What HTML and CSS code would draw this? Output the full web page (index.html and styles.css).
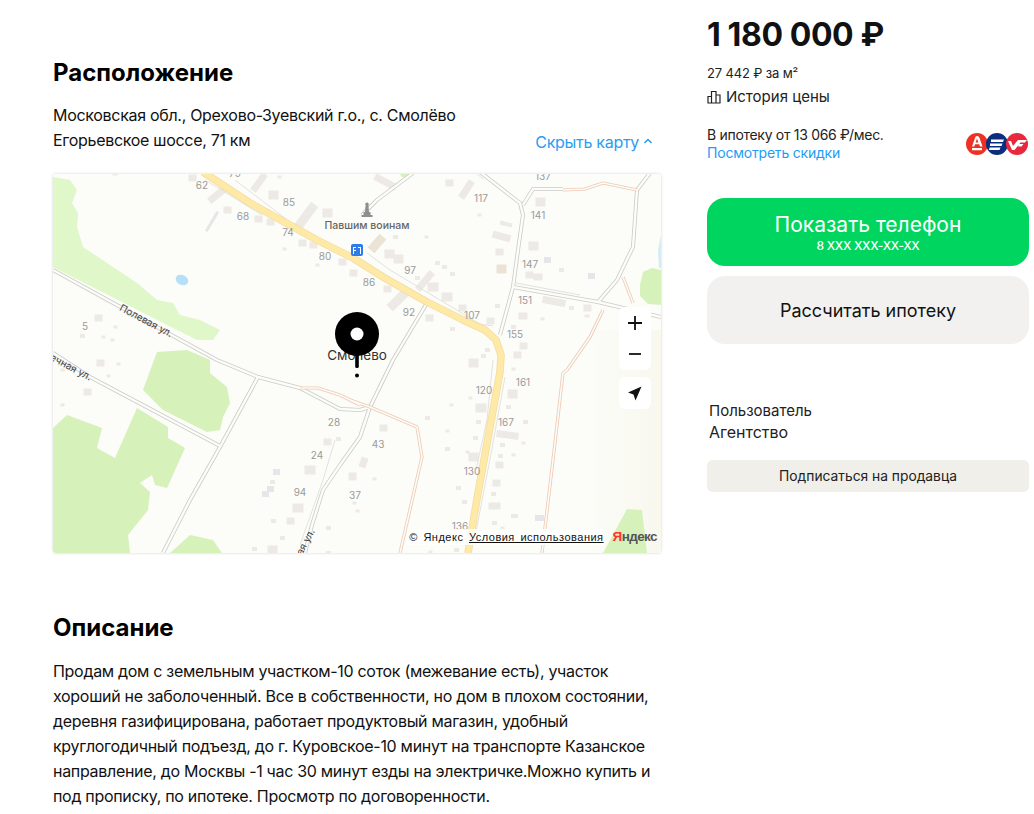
FILE: index.html
```html
<!DOCTYPE html>
<html lang="ru">
<head>
<meta charset="utf-8">
<title>Объявление</title>
<link rel="stylesheet" href="styles.css">
</head>
<body>
<div class="page">
  <main class="left">
    <h2 class="title">Расположение</h2>
    <div class="addr-row">
      <div class="addr">Московская обл., Орехово-Зуевский г.о., с. Смолёво<br>Егорьевское шоссе, 71 км</div>
      <a class="hide-map">Скрыть карту
        <svg class="chev" width="10" height="6" viewBox="0 0 10 6"><path d="M1.5 5 5 1.5 8.5 5"/></svg>
      </a>
    </div>
    <div class="map">
      <svg class="map-svg" width="608" height="379" viewBox="53 174 608 379">
        <defs>
          <linearGradient id="pale" x1="0" y1="0" x2="1" y2="0">
            <stop offset="0" stop-color="#fcfcf8"/>
            <stop offset="1" stop-color="#f8f8ef"/>
          </linearGradient>
          <path id="r1" d="M53 270 217 360 258 377 300 388 340 409 360 410 370 407"/>
          <path id="r2" d="M53 353 90 377 220 446"/>
          <path id="r3" d="M258 377 220 447 190 500 163 553"/>
          <path id="r4" d="M427 303 393 360 370 407 360 437 340 465 323 490 312 525 305 553"/>
          <path id="r5" d="M480 172 520 203 523 215 518 250 513 287 500 335"/>
          <path id="r6" d="M523 205 533 189 563 189"/>
          <path id="r7" d="M650 173 637 190 633 247 617 280 598 302"/>
          <path id="r8" d="M513 287 598 302 661 317"/>
          <path id="r9" d="M413 173 377 200 362 215"/>
          <path id="o1" d="M563 190 585 189 603 183 637 190"/>
          <path id="o2" d="M623 277 633 303"/>
          <path id="o3" d="M603 310 590 337 567 370 563 373 553 460 542 553"/>
          <path id="o4" d="M300 388 318 388 340 395 360 405"/>
          <path id="o5" d="M350 400 370 407 417 427 422 457 400 553"/>
        </defs>
        <rect class="land" x="53" y="174" width="608" height="379"/>
        <rect fill="url(#pale)" x="590" y="330" width="71" height="223"/>
        <g class="green">
          <path d="M53 177 70 180 77 190 72 203 78 213 77 227 83 247 107 263 137 283 157 300 173 303 180 315 200 320 220 330 213 340 197 340 177 330 53 267Z"/>
          <path class="green-d" d="M157 352 187 350 210 360 210 373 227 387 230 403 223 417 220 430 207 432 163 410 143 390Z"/>
          <path class="green-d" d="M53 428 67 415 102 428 97 448 115 458 137 408 168 427 168 438 185 448 167 488 155 485 152 475 140 483 150 492 148 510 128 535 130 553 53 553Z"/>
          <path class="green-d" d="M170 553 190 535 213 540 222 553Z"/>
          <path class="green-d" d="M640 285 643 272 652 268 661 270 661 305 648 304 640 296Z"/>
          <path class="green-d" d="M603 553 627 509 642 510 647 553Z"/>
          <path class="green-d" d="M400 174 413 174 408 177 402 177Z"/>
        </g>
        <path class="lake" d="M661 235 658 250 659 268 661 268Z"/>
        <ellipse class="pond" cx="182" cy="280" rx="6.5" ry="5" transform="rotate(25 182 280)"/>
        <g class="bld">
          <path class="s3" d="M114 174h2M279 177h1M479 215h1M426 237h1M284 249h1M317 265h1M115 327h1M108 376h1M62 405h1M62 370h1M118 364h1M513 369h1M470 398h1M451 405h1M447 431h1M523 443h1M467 452h1M374 479h1M354 503h1M357 511h1M502 528h1M513 455h1M430 552h1M586 316h2M542 319h1M112 340h1M103 337h1"/>
          <path class="s5" d="M502 223 510 225M395 237h1M437 263h1M444 267h1M452 274h1M417 278h1M497 306h1M452 329h1M513 327h1M561 270h1M571 308h1M487 350h1M483 356h1M82 336h1M508 407h1M478 422h1M525 422h1M427 418h1M475 438h1M502 445h1M447 449h1M500 456h1M458 488h1M493 494h1M464 502h1M513 516h3M494 523h1M456 550h1M282 538h1M328 528h1M254 549h1M273 521h1M272 482h1M338 439h1M328 553h1"/>
          <path class="s7" d="M192 178h1M227 210h1M258 219h1M270 222h1M302 243h1M313 245h1M342 262h1M353 273h1M98 318h1M100 363h1M87 392h1M255 188 263 177M212 199 222 191M378 178 393 186M449 183h1M463 195 470 184M496 235 507 238M499 252h1M529 275h1M537 277h2M420 287 430 275M429 318h1M387 289h1M462 308h1M490 321h1M522 316h2M546 300 562 303M587 308h1M523 346h1M517 355h1M500 434 515 436M383 428h1M364 461 363 464M352 476h1M499 465h1M496 483h1M492 506h5M327 442h1M352 477h1M290 521h1"/>
          <path class="s10" d="M273 195h1M300 224 312 208M327 213h1M540 202h1M533 246h1M389 254h1M398 259h1M432 287h2M446 297h2M393 305 405 293M473 363h1M512 394h1M480 408h2M473 457h1M309 470h2M297 508h2M272 550h1"/>
          <path class="tan" d="M501 269h1M374 247 380 240"/>
          <path class="gray-b" d="M547 260h1M591 276h1M538 518h3M276 472h1M265 494h1M270 489h1"/>
          <path class="thin" d="M207 230 217 213"/>
        </g>
        <g class="roads-o">
          <use href="#r1"/><use href="#r2"/><use href="#r3"/><use href="#r4"/><use href="#r5"/><use href="#r6"/><use href="#r7"/><use href="#r8"/><use href="#r9"/>
        </g>
        <g class="roads-i">
          <use href="#r1"/><use href="#r2"/><use href="#r3"/><use href="#r4"/><use href="#r5"/><use href="#r6"/><use href="#r7"/><use href="#r8"/><use href="#r9"/>
        </g>
        <g class="lines">
          <path d="M367 253 390 270 440 300 480 324 493 326M505 377 493 443 477 527 470 553M493 360 487 420 476 470M470 168 483 179M516 283 580 295M335 440 323 480 300 545M235 180 290 222M205 180 262 215"/>
        </g>
        <g class="orange-o">
          <use href="#o1"/><use href="#o2"/><use href="#o3"/><use href="#o4"/><use href="#o5"/>
        </g>
        <g class="orange-i">
          <use href="#o1"/><use href="#o2"/><use href="#o3"/><use href="#o4"/><use href="#o5"/>
        </g>
        <g class="road-y">
          <path class="y-o" d="M203 172 250 203 317 240 353 258 383 277 427 302 463 320 485 330 496 340 501 355 500 372 490 427 478 493 468 553"/>
          <path class="y-i" d="M203 172 250 203 317 240 353 258 383 277 427 302 463 320 485 330 496 340 501 355 500 372 490 427 478 493 468 553"/>
        </g>
        <g class="num">
          <text x="202" y="189">62</text><text x="289" y="206">85</text><text x="243" y="220">68</text><text x="288" y="236">74</text><text x="325" y="260">80</text><text x="85" y="330">5</text><text x="235" y="177">79</text>
          <text x="481" y="202">117</text><text x="538" y="219">141</text><text x="543" y="180">137</text><text x="530" y="268">147</text><text x="410" y="274">97</text><text x="369" y="286">86</text><text x="409" y="316">92</text><text x="525" y="304">151</text><text x="472" y="319">107</text><text x="515" y="338">155</text>
          <text x="484" y="394">120</text><text x="523" y="386">161</text><text x="506" y="426">167</text><text x="378" y="448">43</text><text x="472" y="475">130</text><text x="355" y="499">37</text><text x="334" y="426">28</text><text x="317" y="459">24</text><text x="300" y="496">94</text><text x="460" y="530">136</text>
        </g>
        <g class="street">
          <text transform="translate(146 321) rotate(28)" y="3">Полевая ул.</text>
          <text transform="translate(68 366) rotate(28)" y="3">Речная ул.</text>
          <text transform="translate(300 553) rotate(-62)" y="3">Лесная ул.</text>
        </g>
        <g class="monument"><path d="M365.5 206h3l.5 6h1.500v3h2v2h-11v-2h2v-3h1.500zM367 202.500a1.800 1.800 0 1 0 .01 0z"/></g>
        <text class="poi" x="367" y="229">Павшим воинам</text>
        <rect class="bus" x="351" y="244" width="12" height="12" rx="2"/>
        <path class="bus-g" d="M353 247h3v1h-2v2h2v1h-2v3h-1zM358 247h3v7h-1v-6h-2z"/>
        <text class="place" x="357" y="360">Смолёво</text>
        <circle class="pin" cx="357" cy="334" r="22"/>
        <circle class="pin-hole" cx="357" cy="334" r="6.500"/>
        <rect class="pin" x="355.200" y="350" width="3.600" height="18" rx="1.500"/>
        <circle class="pin" cx="357" cy="375.500" r="2"/>
      </svg>
      <div class="zoom-ctl">
        <svg width="32" height="32" viewBox="0 0 32 32"><path class="ctl-line" d="M16 9v14M9 16h14"/></svg>
        <svg width="32" height="31" viewBox="0 0 32 31"><path class="ctl-line" d="M10 15h12"/></svg>
      </div>
      <div class="loc-ctl">
        <svg width="32" height="32" viewBox="0 0 32 32"><path d="M22.500 9.500 9 15.500l5.500 2 2 6z"/></svg>
      </div>
      <div class="copyright">
        <span class="copy-box">© Яндекс <u>Условия использования</u></span>
        <span class="ya"><b>Я</b>ндекс</span>
      </div>
    </div>
    <h2 class="title title-desc">Описание</h2>
    <p class="desc">Продам дом с земельным участком-10 соток (межевание есть), участок<br>хороший не заболоченный. Все в собственности, но дом в плохом состоянии,<br>деревня газифицирована, работает продуктовый магазин, удобный<br>круглогодичный подъезд, до г. Куровское-10 минут на транспорте Казанское<br>направление, до Москвы -1 час 30 минут езды на электричке.Можно купить и<br>под прописку, по ипотеке. Просмотр по договоренности.</p>
  </main>
  <aside class="right">
    <div class="price">1 180 000 ₽</div>
    <div class="per-m">27 442 ₽ за м²</div>
    <div class="hist">
      <svg width="14" height="14" viewBox="0 0 14 14"><path d="M.5 13h13M1 13V6.500h3.500V13M4.500 13V1.500h4.500V13M9 13V5h4V13"/></svg>
      История цены
    </div>
    <div class="mort">
      <div class="mort-text">
        <div class="mort-line">В ипотеку от 13 066 ₽/мес.</div>
        <a class="link">Посмотреть скидки</a>
      </div>
      <div class="banks">
        <svg width="62" height="24" viewBox="0 0 62 24">
          <circle class="bank-r" cx="11" cy="12" r="11"/>
          <path class="bank-w" d="M11 4c1.500 0 2 .8 2.500 2l3 8.500h-2.500l-.7-2.200H9l-.7 2.200H6l3-8.500c.4-1.200 1-2 2-2zm0 2.500-1.400 4h2.800zM6 16h10v2.200H6z"/>
          <circle class="bank-b" cx="31" cy="12" r="11"/>
          <path class="bank-w" d="M25 7.500h13l-1 2.500H25zM24 11.500h12.500l-1 2.500H24zM23.500 15.500h11l-1 2.500h-10.500z"/>
          <circle class="bank-c" cx="51" cy="12" r="11"/>
          <path class="bank-w" d="M42 9h3l2 5 5-6h9l-2 2.500h-4.500l-6 7.500h-2.500zM53 12h4.500l-2 2.500H52z"/>
        </svg>
      </div>
    </div>
    <button class="btn btn-green">
      <span class="btn-main">Показать телефон</span>
      <span class="btn-sub">8 XXX XXX-XX-XX</span>
    </button>
    <button class="btn btn-gray">Рассчитать ипотеку</button>
    <div class="seller">
      <div class="seller-name">Пользователь</div>
      <div class="seller-type">Агентство</div>
    </div>
    <button class="sub-btn">Подписаться на продавца</button>
  </aside>
</div>
</body>
</html>
```
FILE: styles.css
```css
* { box-sizing: border-box; }
html, body { margin: 0; padding: 0; background: #fff; }
body {
  height: 814px;
  overflow: hidden;
  font-family: Inter, "Noto Sans", "Liberation Sans", sans-serif;
  color: #111;
}
.page { display: flex; padding-left: 53px; gap: 46px; align-items: flex-start; }
.left { width: 608px; flex: none; padding-top: 58px; }
.right { width: 322px; flex: none; padding-top: 15px; }

.title { margin: 0; font-size: 24px; line-height: 29px; font-weight: 700; letter-spacing: 0; color: #000; }
.addr-row { display: flex; justify-content: space-between; align-items: flex-end; margin-top: 16px; padding-right: 8px; }
.addr { font-size: 16px; line-height: 25px; color: #111; letter-spacing: -.3px; }
.hide-map { display: flex; align-items: center; gap: 4px; font-size: 16px; line-height: 22px; color: #2a9df0; letter-spacing: -.3px; }
.chev { fill: none; stroke: #2a9df0; stroke-width: 1.500; margin-bottom: 3px; }

.map { position: relative; width: 608px; height: 379px; margin-top: 21px; border-radius: 3px; overflow: hidden; box-shadow: 0 0 3px rgba(0,0,0,.18); }
.map-svg { display: block; }
.land { fill: #fcfcf8; }
.green path { fill: #dff7c9; }
.green .green-d { fill: #d6f2ba; }
.lake { fill: #d5ecf5; }
.pond { fill: #b5e0f7; }
.bld path { fill: none; stroke: #ede9e5; stroke-linecap: square; }
.bld .s3 { stroke-width: 3px; }
.bld .s5 { stroke-width: 4px; }
.bld .s7 { stroke-width: 7px; }
.bld .s10 { stroke-width: 9px; }
.bld .tan { stroke: #ebe3d5; stroke-width: 9px; }
.bld .gray-b { stroke: #e6e6ea; stroke-width: 6px; }
.bld .thin { stroke: #e8e6e4; stroke-width: 3px; }
.roads-o { fill: none; stroke: #cbcbc9; stroke-width: 4px; stroke-linejoin: round; }
.roads-i { fill: none; stroke: #fcfcf8; stroke-width: 2.400px; stroke-linejoin: round; }
.lines { fill: none; stroke: #e2e2df; stroke-width: 1px; }
.orange-o { fill: none; stroke: #eec9b3; stroke-width: 3.200px; stroke-linejoin: round; }
.orange-i { fill: none; stroke: #fcfcf8; stroke-width: 1.600px; stroke-linejoin: round; }
.y-o { fill: none; stroke: #f3dca0; stroke-width: 7.500px; stroke-linejoin: round; }
.y-i { fill: none; stroke: #fee9a6; stroke-width: 6px; stroke-linejoin: round; }
.num text { font-size: 10px; fill: #9a9a9a; text-anchor: middle; font-family: Inter, sans-serif; }
.street text { font-size: 10px; fill: #444; text-anchor: middle; font-family: Inter, sans-serif; }
.monument path { fill: #8e8e8e; }
.poi { font-size: 10.500px; font-weight: 500; fill: #666; text-anchor: middle; font-family: Inter, sans-serif; }
.bus { fill: #2e7bea; }
.bus-g { fill: #fff; }
.place { font-size: 13.500px; fill: #333; text-anchor: middle; font-family: Inter, sans-serif; }
.pin { fill: #000; }
.pin-hole { fill: #fff; }

.zoom-ctl, .loc-ctl { position: absolute; left: 566px; width: 32px; background: #fff; border-radius: 6px; }
.zoom-ctl { top: 133px; height: 63px; display: flex; flex-direction: column; }
.loc-ctl { top: 203px; height: 32px; }
.zoom-ctl svg, .loc-ctl svg { display: block; }
.ctl-line { fill: none; stroke: #111; stroke-width: 1.800px; }
.loc-ctl path { fill: #111; }
.copyright { position: absolute; right: 4px; bottom: 8px; display: flex; align-items: center; gap: 9px; font-size: 11px; line-height: 14px; color: #111; font-family: "Liberation Sans", Inter, sans-serif; }
.copy-box { background: rgba(255,255,255,.85); padding: 1px 0 1px 2px; letter-spacing: .5px; word-spacing: 2px; }
.ya { font-size: 13.500px; font-weight: 700; color: #555; letter-spacing: -.6px; }
.ya b { color: #f33; font-weight: 700; }

.title-desc { margin-top: 60px; }
.desc { margin: 17px 0 0; font-size: 16px; line-height: 25px; color: #111; letter-spacing: -.3px; }

.price { font-size: 32px; line-height: 40px; font-weight: 700; color: #111; letter-spacing: -.4px; }
.per-m { margin-top: 9px; font-size: 13px; line-height: 18px; color: #222; letter-spacing: -.15px; }
.hist { display: flex; align-items: center; gap: 5px; margin-top: 4px; font-size: 15px; line-height: 22px; color: #222; }
.hist svg { fill: none; stroke: #222; stroke-width: 1.200px; }
.mort { display: flex; justify-content: space-between; align-items: center; margin-top: 18px; font-size: 14px; line-height: 18px; color: #222; }
.mort-line { letter-spacing: -.3px; }
.link { color: #1e9df5; letter-spacing: -.2px; }
.banks { display: flex; }
.banks svg { display: block; margin-right: 1px; }
.bank-r { fill: #ef3124; }
.bank-b { fill: #0b2f7e; }
.bank-c { fill: #e8283c; }
.bank-w { fill: #fff; }

.btn { display: flex; flex-direction: column; align-items: center; justify-content: center; width: 322px; height: 68px; border: 0; border-radius: 18px; font-family: inherit; }
.btn-green { margin-top: 36px; background: #00d65f; color: #fff; }
.btn-main { font-size: 21px; line-height: 26px; }
.btn-sub { font-size: 12px; line-height: 14px; font-weight: 500; margin-top: 1px; letter-spacing: -.3px; }
.btn-gray { margin-top: 10px; background: #f2f1ef; color: #111; font-size: 18px; }
.seller { margin-top: 56px; padding-left: 2px; color: #222; }
.seller-name { font-size: 15px; line-height: 22px; }
.seller-type { font-size: 16px; line-height: 22px; margin-top: -1px; }
.sub-btn { display: block; width: 322px; height: 32px; margin-top: 17px; border: 0; border-radius: 6px; background: #f1efe9; font-family: inherit; font-size: 13.800px; color: #222; }
```
